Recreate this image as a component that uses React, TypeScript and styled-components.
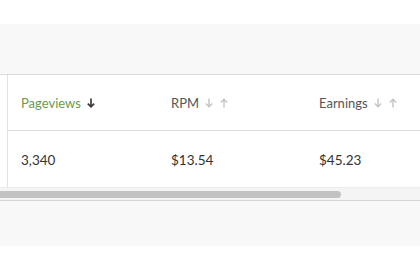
import React from "react";
import styled, { createGlobalStyle } from "styled-components";

type Col = { label: string; value: string; active?: boolean; width: number };

const cols: Col[] = [
  { label: "Pageviews", value: "3,340", active: true, width: 150 },
  { label: "RPM", value: "$13.54", width: 148 },
  { label: "Earnings", value: "$45.23", width: 150 },
];

const GlobalStyle = createGlobalStyle`
  html, body { margin: 0; padding: 0; background: #ffffff; }
  body { font-family: Lato, "Open Sans", sans-serif; overflow: hidden; }
`;

const Arrow: React.FC<{ dir: "down" | "up"; dark?: boolean }> = ({ dir, dark }) => (
  <svg width="8" height="10" viewBox="0 0 8 10" style={{ transform: dir === "up" ? "rotate(180deg)" : undefined }}>
    <path
      d="M4 0.5v8.5M0.8 5.6L4 8.8l3.2-3.2"
      fill="none"
      stroke={dark ? "#3a3a3a" : "#c4c4c4"}
      strokeWidth={dark ? 1.7 : 1.4}
    />
  </svg>
);

const App: React.FC = () => {
  return (
    <>
      <GlobalStyle />
      <TopBar />
      <Main>
        <TableBox>
          <Rows>
            <Row $head>
              {cols.map((c) => (
                <Cell key={c.label} $w={c.width}>
                  <HeadLabel $active={c.active}>{c.label}</HeadLabel>
                  <Sorts>
                    {c.active ? (
                      <Arrow dir="down" dark />
                    ) : (
                      <>
                        <Arrow dir="down" />
                        <Arrow dir="up" />
                      </>
                    )}
                  </Sorts>
                </Cell>
              ))}
            </Row>
            <Row>
              {cols.map((c) => (
                <Cell key={c.label} $w={c.width}>
                  <Value>{c.value}</Value>
                </Cell>
              ))}
            </Row>
          </Rows>
          <ScrollTrack>
            <Thumb />
          </ScrollTrack>
        </TableBox>
      </Main>
    </>
  );
};

const TopBar = styled.div`
  height: 24px;
  background: #ffffff;
`;

const Main = styled.div`
  background: #f8f8f8;
  padding: 50px 0 45px;
`;

const TableBox = styled.div`
  background: #ffffff;
  border-top: 1px solid #dcdcdc;
  border-bottom: 1px solid #d4d4d4;
  overflow: hidden;
`;

const Rows = styled.div`
  margin-left: 7px;
  border-left: 1px solid #e2e2e2;
`;

const Row = styled.div<{ $head?: boolean }>`
  display: flex;
  height: 56px;
  align-items: center;
  border-bottom: ${(p) => (p.$head ? "1px solid #dcdcdc" : "none")};
  padding-top: ${(p) => (p.$head ? 0 : 2)}px;
  box-sizing: border-box;
`;

const Cell = styled.div<{ $w: number }>`
  width: ${(p) => p.$w}px;
  flex: none;
  padding-left: 13px;
  box-sizing: border-box;
  display: flex;
  align-items: center;
`;

const HeadLabel = styled.span<{ $active?: boolean }>`
  font-size: 13px;
  color: ${(p) => (p.$active ? "#6a9a4f" : "#555555")};
`;

const Sorts = styled.span`
  display: inline-flex;
  gap: 7px;
  margin-left: 6px;
  align-items: center;
`;

const Value = styled.span`
  font-size: 13.5px;
  color: #333333;
`;

const ScrollTrack = styled.div`
  height: 12px;
  background: #f4f4f4;
  border-top: 1px solid #ececec;
  display: flex;
  align-items: center;
`;

const Thumb = styled.div`
  width: 341px;
  height: 7px;
  background: #c2c2c2;
  border-radius: 0 4px 4px 0;
`;

export default App;
